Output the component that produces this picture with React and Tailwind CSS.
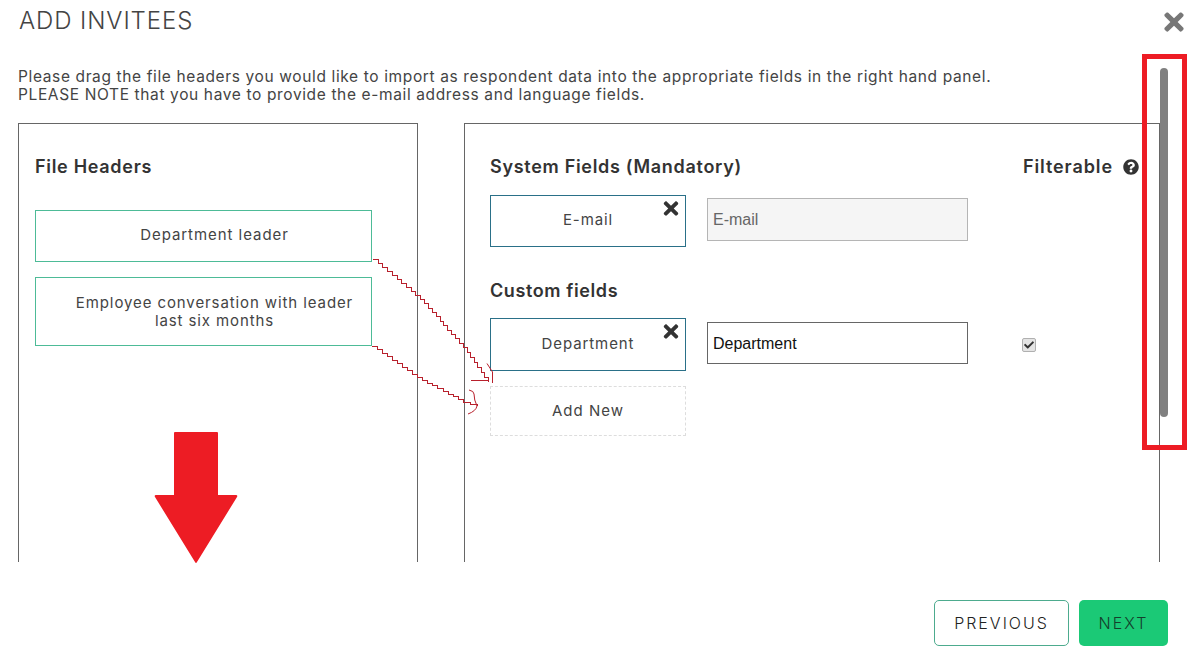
import React from "react";
import { FaTimes, FaQuestionCircle, FaCheck } from "react-icons/fa";

const sans = "font-['Inter','Noto_Sans',sans-serif]";

function stairs(points, step = 6) {
  let d = `M${points[0][0]} ${points[0][1]}`;
  for (let i = 1; i < points.length; i++) {
    const [x0, y0] = points[i - 1];
    const [x1, y1] = points[i];
    const n = Math.max(1, Math.round(Math.hypot(x1 - x0, y1 - y0) / step));
    for (let k = 1; k <= n; k++) {
      const x = Math.round(x0 + ((x1 - x0) * k) / n);
      const y = Math.round(y0 + ((y1 - y0) * k) / n);
      d += ` H${x} V${y}`;
    }
  }
  return d;
}

function Annotations() {
  const a = stairs([[373, 259], [420, 299], [463, 347], [488, 382]]);
  const b = stairs([[372, 346], [417, 377], [463, 402], [477, 406]]);
  return (
    <svg className="absolute left-0 top-0 pointer-events-none" width="1194" height="672" viewBox="0 0 1194 672" fill="none">
      <g stroke="#b8202c" strokeWidth="1">
        <path d={a} shapeRendering="crispEdges" />
        <path d={b} shapeRendering="crispEdges" />
        <path d="M471 380.5H488" />
        <path d="M487 363.5L492.5 372V383" />
        <path d="M469 390Q474 391 474 394Q474 400 477 406Q476 411 468 414" />
      </g>
      <path d="M175 432H217Q218 432 218 433V495H236Q238 495 237 497L197 562Q196 564 195 562L155 497Q154 495 156 495H174V433Q174 432 175 432Z" fill="#ed1c24" />
    </svg>
  );
}

function Tile({ label, className }) {
  return (
    <div className={`relative w-[196px] border border-[#2a7088] flex items-center justify-center text-[15px] tracking-[0.9px] text-[#444] ${className}`}>
      <span>{label}</span>
      <FaTimes className="absolute right-[6px] top-[2px] text-[#333] w-[16px] h-[21px]" />
    </div>
  );
}

export default function App() {
  return (
    <div className={`relative w-[1194px] h-[672px] overflow-hidden bg-white text-[#333] ${sans}`}>
      <header className="flex items-start justify-between pl-[19px] pr-[9px] h-[68px]">
        <h1 className="text-[24px] leading-[42px] font-light tracking-[0.9px] text-[#444]">ADD INVITEES</h1>
        <FaTimes className="mt-[8px] w-[22px] h-[28px] text-[#777]" />
      </header>

      <p className="pl-[18px] text-[15.5px] leading-[18px] tracking-[0.63px] text-[#444] h-[55px]">
        Please drag the file headers you would like to import as respondent data into the appropriate fields in the right hand panel.
        <br />
        PLEASE NOTE that you have to provide the e-mail address and language fields.
      </p>

      <div className="flex gap-[46px] pl-[18px] h-[439px] overflow-hidden">
        <section className="w-[400px] border-x border-t border-[#666] pl-[16px] pt-[31px]">
          <h2 className="text-[18px] leading-[24px] font-semibold tracking-[0.7px] text-[#333]">File Headers</h2>
          <div className="mt-[31px] flex flex-col gap-[15px] w-[337px]">
            <div className="h-[52px] border border-[#4dbb97] flex items-center justify-center text-[15px] tracking-[0.95px] text-[#444] pl-[22px] pb-[2px]">
              Department leader
            </div>
            <div className="h-[69px] border border-[#4dbb97] flex items-center justify-center text-center text-[15px] leading-[18px] tracking-[0.9px] text-[#444] pl-[24px] pr-[2px]">
              Employee conversation with leader last six months
            </div>
          </div>
        </section>

        <section className="w-[696px] border-x border-t border-[#666] pl-[25px] pt-[31px]">
          <div className="flex h-[24px]">
            <h2 className="w-[533px] text-[18px] leading-[24px] font-semibold tracking-[0.7px] text-[#333]">System Fields (Mandatory)</h2>
            <h2 className="text-[18px] leading-[24px] font-semibold tracking-[0.9px] text-[#333]">Filterable</h2>
            <FaQuestionCircle className="ml-[10px] mt-[4px] w-[16px] h-[16px] text-[#333]" />
          </div>

          <div className="mt-[16px] flex items-center gap-[21px]">
            <Tile label="E-mail" className="h-[52px] pb-[2px]" />
            <div className="mt-[-4px] w-[261px] h-[43px] border border-[#b5b5b5] bg-[#f5f5f5] flex items-center pl-[5px] pt-[2px] text-[16px] text-[#666] font-['Liberation_Sans',sans-serif]">
              E-mail
            </div>
          </div>

          <h2 className="mt-[32px] text-[18px] leading-[24px] font-semibold tracking-[0.6px] text-[#333]">Custom fields</h2>

          <div className="mt-[15px] flex items-center gap-[21px]">
            <Tile label="Department" className="h-[53px]" />
            <div className="mb-[3px] w-[261px] h-[42px] border border-[#666] flex items-center pl-[5px] pt-[2px] text-[16px] text-[#111] font-['Liberation_Sans',sans-serif]">
              Department
            </div>
            <span className="ml-[33px] w-[14px] h-[14px] rounded-[2px] border border-[#b0b0b0] bg-[#e4e4e4] flex items-center justify-center" role="checkbox" aria-checked="true">
              <FaCheck className="w-[10px] h-[10px] text-[#333]" />
            </span>
          </div>

          <div className="mt-[15px] w-[196px] h-[50px] border border-dashed border-[#ddd] flex items-center justify-center text-[15px] tracking-[1px] text-[#444]">
            Add New
          </div>
        </section>
      </div>

      <footer className="flex justify-end gap-[10px] pr-[26px] pt-[38px]">
        <button className="w-[135px] h-[46px] rounded-[5px] border border-[#4dab8e] bg-white text-[16px] font-light tracking-[2px] text-[#222]">
          PREVIOUS
        </button>
        <button className="w-[89px] h-[46px] rounded-[5px] bg-[#1bc976] text-[16px] font-light tracking-[2px] text-[#14402c]">
          NEXT
        </button>
      </footer>

      <Annotations />
      <div className="absolute left-[1160px] top-[68px] w-[8px] h-[349px] rounded-full bg-[#808080]" />
      <div className="absolute left-[1142px] top-[54px] w-[45px] h-[396px] border-[5px] border-[#ed1c24]" />
    </div>
  );
}
